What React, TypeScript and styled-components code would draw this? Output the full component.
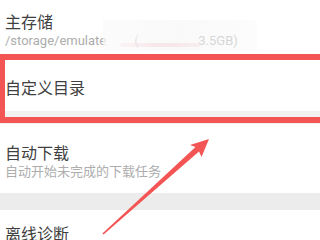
import React from 'react';
import styled, { createGlobalStyle } from 'styled-components';

const GlobalStyle = createGlobalStyle`
  html, body {
    margin: 0;
    padding: 0;
    background: #fff;
  }
  body {
    width: 320px;
    height: 240px;
    overflow: hidden;
    font-family: Roboto, "Noto Sans CJK SC", sans-serif;
  }
`;

const Page = styled.div`
  position: relative;
  width: 320px;
  height: 240px;
  overflow: hidden;
  background: #fff;
  display: flex;
  flex-direction: column;
`;

const Row = styled.div<{ $top: number; $bottom: number }>`
  display: flex;
  flex-direction: column;
  padding: ${(p) => p.$top}px 6px ${(p) => p.$bottom}px 5px;
  background: #fff;
`;

const Title = styled.div`
  font-size: 16px;
  line-height: 22px;
  color: #404040;
  font-family: "Noto Sans CJK SC", sans-serif;
  white-space: nowrap;
`;

const Sub = styled.div`
  display: flex;
  align-items: center;
  font-size: 13px;
  line-height: 18px;
  color: #adadad;
  font-family: Roboto, "Noto Sans CJK SC", sans-serif;
  white-space: nowrap;
`;

const Smudge = styled.span`
  position: relative;
  display: inline-block;
  width: 92px;
  height: 18px;
  &::before {
    content: '(';
    position: absolute;
    left: 28px;
    top: 0;
    color: #c4c4c4;
  }
  &::after {
    content: '';
    position: absolute;
    left: 14px;
    right: -2px;
    top: 11px;
    height: 4px;
    border-radius: 2px;
    background: linear-gradient(90deg, rgba(240, 170, 178, 0.25), rgba(238, 160, 170, 0.55) 50%, rgba(240, 175, 185, 0.35));
  }
`;

const Veil = styled.div`
  position: absolute;
  left: 103px;
  top: 20px;
  width: 154px;
  height: 30px;
  background: linear-gradient(90deg, rgba(250, 250, 250, 0.7), rgba(245, 245, 245, 0.6) 50%, rgba(250, 250, 250, 0.5));
  pointer-events: none;
`;

const Divider = styled.div<{ $h: number; $c: string }>`
  height: ${(p) => p.$h}px;
  background: ${(p) => p.$c};
  flex-shrink: 0;
`;

const Frame = styled.div`
  position: absolute;
  left: 0;
  top: 54px;
  width: 330px;
  height: 57px;
  border: solid #f35555;
  border-width: 6px 5px 6px 5px;
  pointer-events: none;
`;

const Arrow = styled.svg`
  position: absolute;
  left: 0;
  top: 0;
  pointer-events: none;
`;

export default function App() {
  return (
    <Page>
      <GlobalStyle />
      <Row $top={10} $bottom={4}>
        <Title>主存储</Title>
        <Sub>
          /storage/emulate<Smudge />3.5GB)
        </Sub>
      </Row>
      <Row $top={22} $bottom={13}>
        <Title>自定义目录</Title>
      </Row>
      <Divider $h={13} $c="#f2f2f2" />
      <Row $top={17} $bottom={12}>
        <Title>自动下载</Title>
        <Sub>自动开始未完成的下载任务</Sub>
      </Row>
      <Divider $h={17} $c="#ececec" />
      <Row $top={12} $bottom={10}>
        <Title>离线诊断</Title>
      </Row>
      <Veil />
      <Frame />
      <Arrow width="320" height="240" viewBox="0 0 320 240">
        <polygon
          points="209,139 201.5,157 199,151.5 103.6,234.6 102.4,233.4 195.5,147 190,145"
          fill="#f35555"
        />
      </Arrow>
    </Page>
  );
}
